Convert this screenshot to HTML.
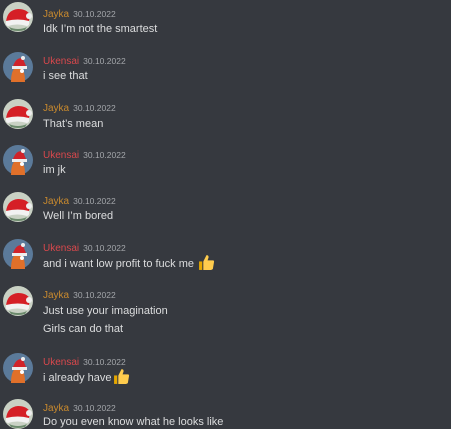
<!DOCTYPE html>
<html><head><meta charset="utf-8"><style>
body{margin:0;width:451px;height:428px;background:#36393f;overflow:hidden;position:relative;font-family:"Liberation Sans",sans-serif}
.n{position:absolute;left:43px;font-size:10px;line-height:12px;white-space:nowrap}
.n span{color:#a3a6aa;font-size:8.5px;margin-left:4px}
.j{color:#c98a2e}.u{color:#d9484c}
.t{position:absolute;left:43px;font-size:11px;line-height:14px;height:14px;color:#dcddde;white-space:nowrap}
.a{position:absolute;left:3px;width:30px;height:30px}
.th{position:absolute;top:-3px;width:17px;height:17px}
</style></head><body>
<svg width="0" height="0" style="position:absolute"><defs>
<symbol id="J" viewBox="0 0 30 30"><circle cx="15" cy="15" r="15" fill="#c9d1c4"/><path d="M3 20 Q4 8 15 7 Q24 7 27 13 L26 19 Z" fill="#d51f26"/><path d="M3 19 Q15 16 26 19 Q27 23 24 24 Q14 21 5 24 Q2 23 3 19Z" fill="#f2f2f2"/><circle cx="26" cy="14" r="3" fill="#eee"/><path d="M6 25 Q15 29 24 25 L22 28 Q15 30 8 28Z" fill="#6b8a6c"/></symbol>
<symbol id="U" viewBox="0 0 30 30"><circle cx="15" cy="15" r="15" fill="#5b7a9a"/><path d="M8 30 Q8 16 15 14 Q22 15 22 30Z" fill="#e0702a"/><path d="M10 14 Q14 4 20 7 L23 14Z" fill="#d0232a"/><path d="M9 14 H24 V17 H9Z" fill="#eee"/><circle cx="20" cy="6" r="2" fill="#eee"/><circle cx="19" cy="19" r="2" fill="#fff"/></symbol>
<symbol id="T" viewBox="0 0 16 16"><path d="M1 7h3v8H1z" fill="#e6a700"/><path d="M5 7 L8 1 Q10 1 10 3 L9 6 H14 Q15.5 6 15 8 L14 14 Q13.5 15 12 15 H5Z" fill="#ffcc4d"/></symbol>
</defs></svg>

<svg class="a" style="top:2px"><use href="#J"/></svg>
<div class="n j" style="top:8px">Jayka<span>30.10.2022</span></div>
<div class="t" style="top:22px">Idk I’m not the smartest</div>

<svg class="a" style="top:52px"><use href="#U"/></svg>
<div class="n u" style="top:55px">Ukensai<span>30.10.2022</span></div>
<div class="t" style="top:69px">i see that</div>

<svg class="a" style="top:99px"><use href="#J"/></svg>
<div class="n j" style="top:102px">Jayka<span>30.10.2022</span></div>
<div class="t" style="top:117px">That’s mean</div>

<svg class="a" style="top:145px"><use href="#U"/></svg>
<div class="n u" style="top:149px">Ukensai<span>30.10.2022</span></div>
<div class="t" style="top:163px">im jk</div>

<svg class="a" style="top:192px"><use href="#J"/></svg>
<div class="n j" style="top:195px">Jayka<span>30.10.2022</span></div>
<div class="t" style="top:209px">Well I’m bored</div>

<svg class="a" style="top:239px"><use href="#U"/></svg>
<div class="n u" style="top:242px">Ukensai<span>30.10.2022</span></div>
<div class="t" style="top:257px">and i want low profit to fuck me</div>
<svg class="th" style="left:198px;top:254px"><use href="#T"/></svg>

<svg class="a" style="top:286px"><use href="#J"/></svg>
<div class="n j" style="top:289px">Jayka<span>30.10.2022</span></div>
<div class="t" style="top:304px">Just use your imagination</div>
<div class="t" style="top:322px">Girls can do that</div>

<svg class="a" style="top:353px"><use href="#U"/></svg>
<div class="n u" style="top:356px">Ukensai<span>30.10.2022</span></div>
<div class="t" style="top:371px">i already have</div>
<svg class="th" style="left:113px;top:368px"><use href="#T"/></svg>

<svg class="a" style="top:399px"><use href="#J"/></svg>
<div class="n j" style="top:402px">Jayka<span>30.10.2022</span></div>
<div class="t" style="top:415px">Do you even know what he looks like</div>
</body></html>
